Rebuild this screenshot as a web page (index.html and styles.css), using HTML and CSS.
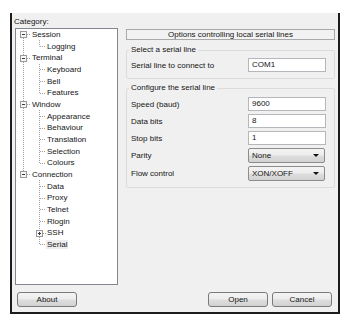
FILE: index.html
```html
<!DOCTYPE html>
<html>
<head>
<meta charset="utf-8">
<title>PuTTY Configuration - Serial</title>
<link rel="stylesheet" href="styles.css">
</head>
<body>
<div class="dialog">
  <div class="main">
    <div class="left">
      <div class="cat-label">Category:</div>
      <div class="tree">
        <svg class="tree-lines" width="101" height="255" viewBox="0 0 101 255">
          <g stroke="#a0a0a0" stroke-width="1" stroke-dasharray="1 1" fill="none">
            <line x1="7.5" y1="9" x2="7.5" y2="26"/>
            <line x1="7.5" y1="33" x2="7.5" y2="72"/>
            <line x1="7.5" y1="79" x2="7.5" y2="142"/>
            <line x1="11" y1="5.5" x2="15" y2="5.5"/>
            <line x1="11" y1="29.5" x2="15" y2="29.5"/>
            <line x1="11" y1="75.5" x2="15" y2="75.5"/>
            <line x1="11" y1="145.5" x2="15" y2="145.5"/>
            <line x1="23.5" y1="11" x2="23.5" y2="17.5"/>
            <line x1="23.5" y1="35" x2="23.5" y2="64.5"/>
            <line x1="23.5" y1="81" x2="23.5" y2="134.5"/>
            <line x1="23.5" y1="151" x2="23.5" y2="201"/>
            <line x1="23.5" y1="208" x2="23.5" y2="215.5"/>
            <line x1="24" y1="17.5" x2="30" y2="17.5"/>
            <line x1="24" y1="40.5" x2="30" y2="40.5"/>
            <line x1="24" y1="52.5" x2="30" y2="52.5"/>
            <line x1="24" y1="64.5" x2="30" y2="64.5"/>
            <line x1="24" y1="87.5" x2="30" y2="87.5"/>
            <line x1="24" y1="99.5" x2="30" y2="99.5"/>
            <line x1="24" y1="110.5" x2="30" y2="110.5"/>
            <line x1="24" y1="122.5" x2="30" y2="122.5"/>
            <line x1="24" y1="134.5" x2="30" y2="134.5"/>
            <line x1="24" y1="157.5" x2="30" y2="157.5"/>
            <line x1="24" y1="169.5" x2="30" y2="169.5"/>
            <line x1="24" y1="180.5" x2="30" y2="180.5"/>
            <line x1="24" y1="192.5" x2="30" y2="192.5"/>
            <line x1="27" y1="204.5" x2="30" y2="204.5"/>
            <line x1="24" y1="215.5" x2="30" y2="215.5"/>
          </g>
          <g stroke="#9a9a9a" stroke-width="1" fill="#f7f7f7">
            <rect x="4.5" y="2.5" width="6" height="6"/>
            <rect x="4.5" y="26.5" width="6" height="6"/>
            <rect x="4.5" y="72.5" width="6" height="6"/>
            <rect x="4.5" y="142.5" width="6" height="6"/>
            <rect x="20.5" y="201.5" width="6" height="6"/>
          </g>
          <g stroke="#3a3a3a" stroke-width="1">
            <line x1="6" y1="5.5" x2="9" y2="5.5"/>
            <line x1="6" y1="29.5" x2="9" y2="29.5"/>
            <line x1="6" y1="75.5" x2="9" y2="75.5"/>
            <line x1="6" y1="145.5" x2="9" y2="145.5"/>
            <line x1="22" y1="204.5" x2="25" y2="204.5"/>
            <line x1="23.5" y1="203" x2="23.5" y2="206"/>
          </g>
        </svg>
        <div class="node top">Session</div>
        <div class="node child">Logging</div>
        <div class="node top">Terminal</div>
        <div class="node child">Keyboard</div>
        <div class="node child">Bell</div>
        <div class="node child">Features</div>
        <div class="node top">Window</div>
        <div class="node child">Appearance</div>
        <div class="node child">Behaviour</div>
        <div class="node child">Translation</div>
        <div class="node child">Selection</div>
        <div class="node child">Colours</div>
        <div class="node top">Connection</div>
        <div class="node child">Data</div>
        <div class="node child">Proxy</div>
        <div class="node child">Telnet</div>
        <div class="node child">Rlogin</div>
        <div class="node child">SSH</div>
        <div class="node child"><span class="selected">Serial</span></div>
      </div>
    </div>
    <div class="right">
      <div class="header">Options controlling local serial lines</div>
      <fieldset class="group g1">
        <legend>Select a serial line</legend>
        <div class="row"><span class="lbl">Serial line to connect to</span><div class="edit">COM1</div></div>
      </fieldset>
      <fieldset class="group g2">
        <legend>Configure the serial line</legend>
        <div class="row"><span class="lbl">Speed (baud)</span><div class="edit">9600</div></div>
        <div class="row"><span class="lbl">Data bits</span><div class="edit">8</div></div>
        <div class="row"><span class="lbl">Stop bits</span><div class="edit">1</div></div>
        <div class="row combo-row"><span class="lbl">Parity</span><div class="combo"><span class="val">None</span><span class="arrow"></span></div></div>
        <div class="row combo-row"><span class="lbl">Flow control</span><div class="combo"><span class="val">XON/XOFF</span><span class="arrow"></span></div></div>
      </fieldset>
    </div>
  </div>
  <div class="buttons">
    <button class="btn about">About</button>
    <span class="spacer"></span>
    <button class="btn">Open</button>
    <button class="btn">Cancel</button>
  </div>
</div>
</body>
</html>
```
FILE: styles.css
```css
html, body {
  margin: 0;
  padding: 0;
  background: #ffffff;
}
body {
  font-family: "Liberation Sans", Arial, sans-serif;
  font-size: 8px;
  color: #151515;
}
.dialog {
  box-sizing: border-box;
  margin: 13px 0 0 10px;
  width: 330px;
  height: 301px;
  background: #f0f0f0;
  border-left: 2px solid #1c1c1c;
  border-right: 2px solid #1c1c1c;
  border-bottom: 2px solid #1c1c1c;
  padding: 4px 3px 5px 3px;
  display: flex;
  flex-direction: column;
}
.main {
  display: flex;
  gap: 8px;
}
.left {
  width: 103px;
  flex: none;
}
.cat-label {
  line-height: 10px;
  height: 10px;
  margin-left: -1px;
  margin-bottom: 1px;
}
.tree {
  position: relative;
  box-sizing: border-box;
  height: 257px;
  background: #ffffff;
  border: 1px solid #828790;
}
.tree-lines {
  position: absolute;
  left: 0;
  top: 0;
}
.node {
  height: 11.67px;
  line-height: 11.67px;
  white-space: nowrap;
}
.node.top {
  padding-left: 16px;
}
.node.child {
  padding-left: 31px;
}
.selected {
  background: #ededed;
  padding: 0 1px;
  margin-left: -1px;
}
.right {
  flex: 1;
  padding-top: 12px;
  display: flex;
  flex-direction: column;
}
.header {
  box-sizing: border-box;
  height: 11px;
  line-height: 9px;
  text-align: center;
  border: 1px solid #a9a9a9;
  background: #f2f2f2;
}
.group {
  margin: 0;
  min-width: 0;
  border: 1px solid #dcdcdc;
  border-radius: 2px;
  padding: 3px 8px 6px 4px;
}
.g1 {
  margin-top: 5px;
}
.g2 {
  margin-top: 4px;
  padding-top: 4px;
}
.group legend {
  padding: 0 2px;
  margin-left: -2px;
  line-height: 10px;
  height: 10px;
}
.row {
  display: flex;
  align-items: center;
  height: 14px;
}
.row + .row {
  margin-top: 3px;
}
.row.combo-row {
  height: 15px;
}
.lbl {
  flex: 1;
}
.edit {
  box-sizing: border-box;
  width: 78px;
  height: 14px;
  line-height: 12px;
  padding-left: 3px;
  background: #ffffff;
  border: 1px solid #b5b7bc;
}
.combo {
  box-sizing: border-box;
  width: 77px;
  height: 15px;
  margin-right: 1px;
  display: flex;
  align-items: center;
  padding: 0 5px 0 3px;
  border: 1px solid #8c8c8c;
  border-radius: 2px;
  background: linear-gradient(#f4f4f4 0%, #ececec 48%, #dedede 52%, #d2d2d2 100%);
}
.combo .val {
  flex: 1;
}
.arrow {
  width: 0;
  height: 0;
  border-left: 3px solid transparent;
  border-right: 3px solid transparent;
  border-top: 3px solid #111;
}
.buttons {
  margin-top: auto;
  display: flex;
  align-items: center;
  gap: 4px;
}
.spacer {
  flex: 1;
}
.btn {
  box-sizing: border-box;
  width: 60px;
  height: 15px;
  padding: 0;
  margin: 0;
  font-family: "Liberation Sans", Arial, sans-serif;
  font-size: 8px;
  line-height: 13px;
  color: #151515;
  border: 1px solid #7a7a7a;
  border-radius: 3px;
  background: linear-gradient(#f4f4f4 0%, #ececec 48%, #dedede 52%, #d2d2d2 100%);
}
.btn.about {
  margin-left: 2px;
}
.btn:last-child {
  margin-right: 3px;
}
```
